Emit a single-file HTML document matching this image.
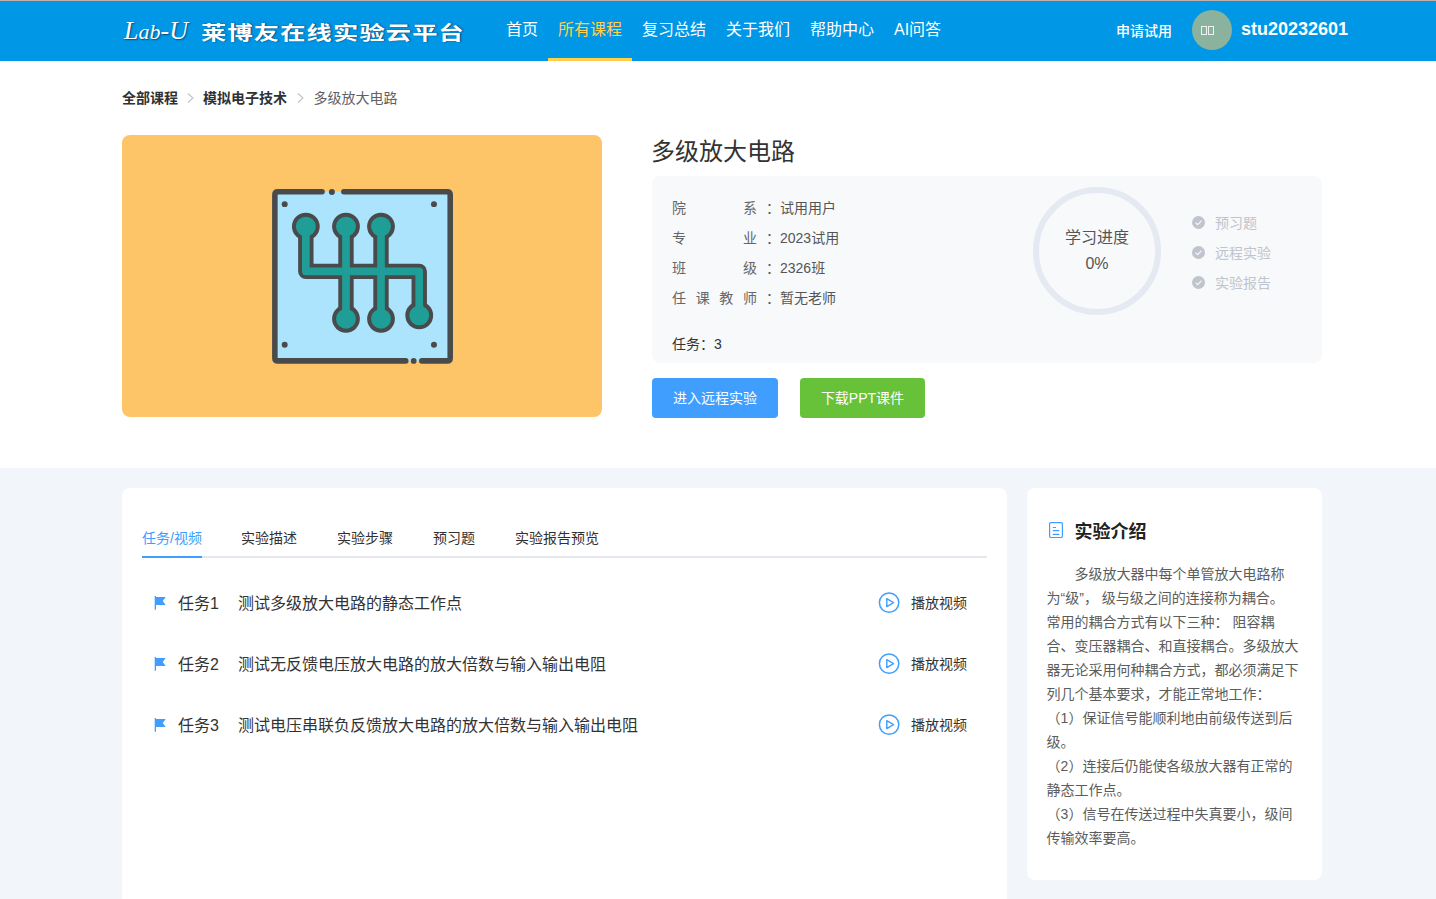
<!DOCTYPE html>
<html lang="zh-CN">
<head>
<meta charset="utf-8">
<title>多级放大电路 - Lab-U 莱博友在线实验云平台</title>
<style>
*{box-sizing:border-box;margin:0;padding:0}
html,body{width:1436px;height:899px;overflow:hidden;background:#fff}
body{font-family:"Liberation Sans","Noto Sans CJK SC",sans-serif;font-size:14px;color:#333;position:relative}
.abs{position:absolute;white-space:nowrap}
/* header */
#topline{left:0;top:0;width:1436px;height:1px;background:#c0b1ad}
#header{left:0;top:1px;width:1436px;height:60px;background:#0097e6}
#logo-en{left:124px;top:13px;font-family:"Liberation Serif","DejaVu Serif",serif;font-style:italic;font-size:26px;line-height:36px;color:#fff;text-shadow:1px 1px 1.5px rgba(0,40,80,.7)}
#logo-en span{font-size:22px}
#logo-cn{left:201px;top:13px;font-family:"Noto Sans CJK SC",sans-serif;font-weight:700;font-size:23px;line-height:36px;letter-spacing:1px;color:#fff;text-shadow:1px 1px 1.5px rgba(0,40,80,.75);transform-origin:0 50%;transform:scale(1.1,.86)}
.nav{top:1px;height:60px;line-height:58px;font-size:16px;color:#fff;padding:0 10px}
.nav.on{color:#ffd04b;border-bottom:3px solid #ffd04b;line-height:58px}
#apply{left:1116px;top:21px;font-size:14px;line-height:20px;color:#fff;font-weight:500}
#avatar{left:1192px;top:10px;width:40px;height:40px;border-radius:50%;background:#8ab29d}
#avatar i{position:absolute;top:16px;width:6px;height:9px;border:1px solid #eef3ef}
#uname{left:1241px;top:17px;font-size:18px;line-height:24px;font-weight:700;color:#fff}
/* breadcrumb */
.bc{top:88px;line-height:20px;font-size:14px}
.bc.b{font-weight:700;color:#303133}
.bc.n{color:#606266}
/* hero */
#pic{left:122px;top:135px;width:480px;height:282px;border-radius:8px;background:#fec468}
#title{left:651px;top:134px;font-size:24px;line-height:36px;color:#333}
#info{left:652px;top:176px;width:670px;height:187px;border-radius:8px;background:#f7f9fb}
.lab{left:672px;width:85px;font-size:14px;line-height:20px;color:#666;text-align:justify;text-align-last:justify}
.val{left:764px;font-size:14px;line-height:20px;color:#555}
.val b{font-weight:400;display:inline-block;width:14px;margin-left:2px}
#tasks{left:672px;top:334px;line-height:20px;color:#333}
.btn{top:378px;height:40px;line-height:40px;border-radius:4px;color:#fff;font-size:14px;font-weight:400;text-align:center}
#ring{left:1033px;top:187px;width:128px;height:128px;border-radius:50%;border:6px solid #e5e9f2}
.rt{left:1033px;width:128px;text-align:center;color:#555;font-size:16px;line-height:20px}
.ck{left:1192px;width:13px;height:13px}
.ckt{left:1215px;color:#c0c4cc;font-size:14px;line-height:20px}
/* lower */
#grey{left:0;top:468px;width:1436px;height:431px;background:#f2f5fa}
#main{left:122px;top:488px;width:885px;height:500px;border-radius:8px;background:#fff}
#side{left:1027px;top:488px;width:295px;height:392px;border-radius:8px;background:#fff}
.tab{top:518px;height:40px;line-height:40px;font-size:14px;color:#303133}
.tab.on{color:#409eff}
#tabline{left:142px;top:556px;width:845px;height:2px;background:#e4e7ed}
#tabbar{left:142px;top:556px;width:60px;height:2px;background:#409eff}
.tk{font-size:16px;line-height:24px;color:#333}
.pv{left:911px;font-size:14px;line-height:20px;color:#333}
.flag{left:153px;width:13px;height:15px}
.play{left:878px;width:22px;height:22px}
#stitle{left:1074.5px;top:519px;font-size:18px;line-height:26px;font-weight:700;color:#222}
#sdoc{left:1049px;top:522px;width:14px;height:16px}
#stext{left:1046.6px;top:562px;width:275px;white-space:nowrap;font-size:14px;line-height:24px;color:#5c5c5c}
#stext p{text-indent:2em}

</style>
</head>
<body>
<div class="abs" id="topline"></div>
<div class="abs" id="header"></div>
<div class="abs" id="logo-en">L<span>ab</span>-U</div>
<div class="abs" id="logo-cn">莱博友在线实验云平台</div>
<div class="abs nav" style="left:496px">首页</div>
<div class="abs nav on" style="left:548px">所有课程</div>
<div class="abs nav" style="left:632px">复习总结</div>
<div class="abs nav" style="left:716px">关于我们</div>
<div class="abs nav" style="left:800px">帮助中心</div>
<div class="abs nav" style="left:884px">AI问答</div>
<div class="abs" id="apply">申请试用</div>
<div class="abs" id="avatar"><i style="left:9px"></i><i style="left:16px"></i></div>
<div class="abs" id="uname">stu20232601</div>

<div class="abs bc b" style="left:122px">全部课程</div>
<svg class="abs" style="left:186px;top:92px" width="9" height="12" viewBox="0 0 9 12"><path d="M2 1.5 L7 6 L2 10.5" fill="none" stroke="#c0c4cc" stroke-width="1.1"/></svg>
<div class="abs bc b" style="left:203px">模拟电子技术</div>
<svg class="abs" style="left:296px;top:92px" width="9" height="12" viewBox="0 0 9 12"><path d="M2 1.5 L7 6 L2 10.5" fill="none" stroke="#c0c4cc" stroke-width="1.1"/></svg>
<div class="abs bc n" style="left:313.5px">多级放大电路</div>

<div class="abs" id="pic"></div>
<svg class="abs" id="icon" style="left:262px;top:180px" width="200" height="192" viewBox="0 0 936 899">
 <rect x="60" y="55" width="821" height="792" fill="#ace4fd"/>
 <g fill="none" stroke="#484a4c" stroke-width="26" stroke-linecap="round" stroke-linejoin="round">
  <path d="M281 55 H74 Q60 55 60 69 V833 Q60 847 74 847 H673"/>
  <path d="M383 55 H867 Q881 55 881 69 V833 Q881 847 867 847 H748"/>
 </g>
 <g fill="#484a4c">
  <circle cx="327" cy="56" r="14"/><circle cx="710" cy="847" r="13.5"/>
  <circle cx="106" cy="113" r="14"/><circle cx="805" cy="113" r="14"/>
  <circle cx="106" cy="771" r="14"/><circle cx="805" cy="771" r="14"/>
 </g>
 <g fill="none" stroke="#484a4c" stroke-width="72" stroke-linejoin="round" stroke-linecap="butt">
  <path d="M205 218 V428 H736 V632"/><path d="M393 218 V650"/><path d="M557 218 V650"/>
 </g>
 <g fill="#484a4c">
  <circle cx="205" cy="218" r="65"/><circle cx="393" cy="218" r="65"/><circle cx="557" cy="218" r="65"/>
  <circle cx="393" cy="650" r="65"/><circle cx="557" cy="650" r="65"/><circle cx="736" cy="634" r="65"/>
 </g>
 <g fill="none" stroke="#1f9e97" stroke-width="36" stroke-linejoin="round" stroke-linecap="butt">
  <path d="M205 218 V428 H736 V632"/><path d="M393 218 V650"/><path d="M557 218 V650"/>
 </g>
 <g fill="#1f9e97">
  <circle cx="205" cy="218" r="46.5"/><circle cx="393" cy="218" r="46.5"/><circle cx="557" cy="218" r="46.5"/>
  <circle cx="393" cy="650" r="46.5"/><circle cx="557" cy="650" r="46.5"/><circle cx="736" cy="634" r="46.5"/>
 </g>
</svg>

<div class="abs" id="title">多级放大电路</div>
<div class="abs" id="info"></div>
<div class="abs lab" style="top:198px">院系</div><div class="abs val" style="top:198px"><b>：</b>试用用户</div>
<div class="abs lab" style="top:228px">专业</div><div class="abs val" style="top:228px"><b>：</b>2023试用</div>
<div class="abs lab" style="top:258px">班级</div><div class="abs val" style="top:258px"><b>：</b>2326班</div>
<div class="abs lab" style="top:288px">任课教师</div><div class="abs val" style="top:288px"><b>：</b>暂无老师</div>
<div class="abs" id="tasks">任务：3</div>
<div class="abs" id="ring"></div>
<div class="abs rt" style="top:228px">学习进度</div>
<div class="abs rt" style="top:254px">0%</div>
<svg class="abs ck" style="top:216px" viewBox="0 0 13 13"><circle cx="6.5" cy="6.5" r="6.5" fill="#c0c4cc"/><path d="M3.6 6.7 L5.7 8.7 L9.5 4.6" fill="none" stroke="#f7f9fb" stroke-width="1.1"/></svg>
<svg class="abs ck" style="top:246px" viewBox="0 0 13 13"><circle cx="6.5" cy="6.5" r="6.5" fill="#c0c4cc"/><path d="M3.6 6.7 L5.7 8.7 L9.5 4.6" fill="none" stroke="#f7f9fb" stroke-width="1.1"/></svg>
<svg class="abs ck" style="top:276px" viewBox="0 0 13 13"><circle cx="6.5" cy="6.5" r="6.5" fill="#c0c4cc"/><path d="M3.6 6.7 L5.7 8.7 L9.5 4.6" fill="none" stroke="#f7f9fb" stroke-width="1.1"/></svg>
<div class="abs ckt" style="top:213px">预习题</div>
<div class="abs ckt" style="top:243px">远程实验</div>
<div class="abs ckt" style="top:273px">实验报告</div>
<div class="abs btn" style="left:652px;width:126px;background:#409eff">进入远程实验</div>
<div class="abs btn" style="left:800px;width:125px;background:#67c23a">下载PPT课件</div>

<div class="abs" id="grey"></div>
<div class="abs" id="main"></div>
<div class="abs" id="side"></div>
<div class="abs" id="tabline"></div>
<div class="abs" id="tabbar"></div>
<div class="abs tab on" style="left:142px">任务/视频</div>
<div class="abs tab" style="left:241px">实验描述</div>
<div class="abs tab" style="left:337px">实验步骤</div>
<div class="abs tab" style="left:433px">预习题</div>
<div class="abs tab" style="left:515px">实验报告预览</div>

<svg class="abs flag" style="top:596px" viewBox="0 0 13 15"><path d="M1.7 0.1 H3 V0.9 H12.7 L9.8 4.95 L12.7 9 H3 V13.8 H1.7 Z" fill="#409eff"/></svg>
<div class="abs tk" style="left:178px;top:592px">任务1</div>
<div class="abs tk" style="left:238px;top:592px">测试多级放大电路的静态工作点</div>
<svg class="abs play" style="top:592px" viewBox="0 0 22 22"><circle cx="11.1" cy="10.6" r="9.7" fill="none" stroke="#409eff" stroke-width="1.5"/><path d="M8.8 6.6 L15.5 10.6 L8.8 14.6 Z" fill="none" stroke="#409eff" stroke-width="1.4" stroke-linejoin="round"/></svg>
<div class="abs pv" style="top:593px">播放视频</div>

<svg class="abs flag" style="top:657px" viewBox="0 0 13 15"><path d="M1.7 0.1 H3 V0.9 H12.7 L9.8 4.95 L12.7 9 H3 V13.8 H1.7 Z" fill="#409eff"/></svg>
<div class="abs tk" style="left:178px;top:653px">任务2</div>
<div class="abs tk" style="left:238px;top:653px">测试无反馈电压放大电路的放大倍数与输入输出电阻</div>
<svg class="abs play" style="top:653px" viewBox="0 0 22 22"><circle cx="11.1" cy="10.6" r="9.7" fill="none" stroke="#409eff" stroke-width="1.5"/><path d="M8.8 6.6 L15.5 10.6 L8.8 14.6 Z" fill="none" stroke="#409eff" stroke-width="1.4" stroke-linejoin="round"/></svg>
<div class="abs pv" style="top:654px">播放视频</div>

<svg class="abs flag" style="top:718px" viewBox="0 0 13 15"><path d="M1.7 0.1 H3 V0.9 H12.7 L9.8 4.95 L12.7 9 H3 V13.8 H1.7 Z" fill="#409eff"/></svg>
<div class="abs tk" style="left:178px;top:714px">任务3</div>
<div class="abs tk" style="left:238px;top:714px">测试电压串联负反馈放大电路的放大倍数与输入输出电阻</div>
<svg class="abs play" style="top:714px" viewBox="0 0 22 22"><circle cx="11.1" cy="10.6" r="9.7" fill="none" stroke="#409eff" stroke-width="1.5"/><path d="M8.8 6.6 L15.5 10.6 L8.8 14.6 Z" fill="none" stroke="#409eff" stroke-width="1.4" stroke-linejoin="round"/></svg>
<div class="abs pv" style="top:715px">播放视频</div>

<svg class="abs" id="sdoc" viewBox="0 0 14 16"><rect x="0.6" y="0.6" width="12.8" height="14.9" rx="1.2" fill="none" stroke="#409eff" stroke-width="1.2"/><path d="M3.8 5.5 H7 M3.8 8.7 H10.3 M3.8 12.3 H10.3" stroke="#409eff" stroke-width="1.2" fill="none"/></svg>
<div class="abs" id="stitle">实验介绍</div>
<div class="abs" id="stext"><p>多级放大器中每个单管放大电路称<br>为“级”， 级与级之间的连接称为耦合。<br>常用的耦合方式有以下三种： 阻容耦<br>合、变压器耦合、和直接耦合。多级放大<br>器无论采用何种耦合方式，都必须满足下<br>列几个基本要求，才能正常地工作：</p><div>（1）保证信号能顺利地由前级传送到后<br>级。</div><div>（2）连接后仍能使各级放大器有正常的<br>静态工作点。</div><div>（3）信号在传送过程中失真要小，级间<br>传输效率要高。</div></div>
</body>
</html>
